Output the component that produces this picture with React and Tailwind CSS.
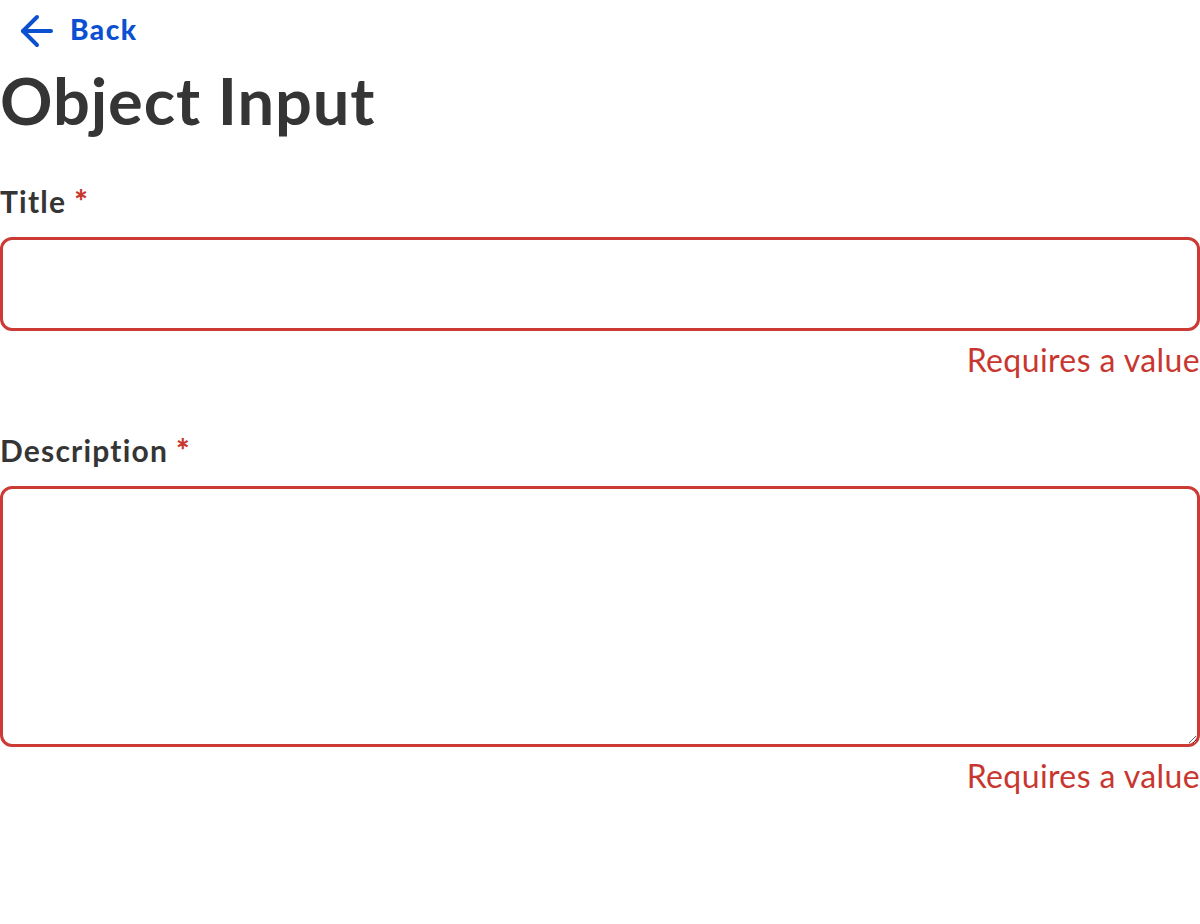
import { ArrowLeft } from 'lucide-react'

function Field({ label, multiline, gapTop }) {
  return (
    <div className={`flex flex-col ${gapTop}`}>
      <label className="text-[30px] font-bold leading-[36px] tracking-[1.2px] text-[#353535]">
        {label}
        <span className="ml-[8px] text-[32px] font-black leading-[30px] text-[#c8372f]">*</span>
      </label>
      {multiline ? (
        <textarea className="mt-[18px] h-[261px] w-full resize-y rounded-[12px] border-[3px] border-[#cc3a35] bg-white px-4 py-3 outline-none" />
      ) : (
        <input className="mt-[18px] h-[94px] w-full rounded-[12px] border-[3px] border-[#cc3a35] bg-white px-4 outline-none" />
      )}
      <p className="mt-[9px] text-right text-[32px] leading-[40px] tracking-[0.4px] text-[#c8372f]">Requires a value</p>
    </div>
  )
}

export default function App() {
  return (
    <div className="min-h-screen bg-white font-['Lato',sans-serif] text-[#353535]">
      <a href="#" className="flex items-start pl-[13px] pt-[5px] text-[#0b50d0]">
        <ArrowLeft className="mt-[2px] h-[48px] w-[48px]" strokeWidth={2} />
        <span className="ml-[9px] mt-[6px] text-[28px] font-black leading-[36px] tracking-[1.5px]">Back</span>
      </a>
      <h1 className="mt-[9px] text-[65px] font-bold leading-[72px] tracking-[0.9px]">Object Input</h1>
      <div className="mt-[47px] flex flex-col">
        <Field label="Title" />
        <Field label="Description" multiline gapTop="mt-[52px]" />
      </div>
    </div>
  )
}
